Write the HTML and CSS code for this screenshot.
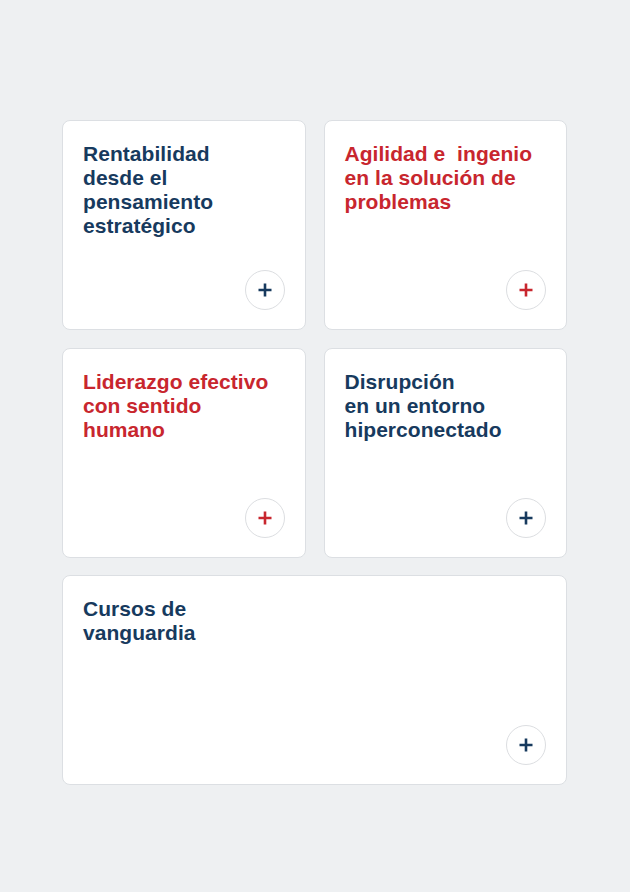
FILE: index.html
```html
<!DOCTYPE html>
<html lang="es">
<head>
<meta charset="utf-8">
<title>Cursos</title>
<link rel="stylesheet" href="styles.css">
</head>
<body>
<main class="grid">
  <article class="card">
    <h2 class="title navy">Rentabilidad<br>desde el<br>pensamiento<br>estratégico</h2>
    <button class="plus navy" aria-label="Ver más"><svg viewBox="0 0 16 16"><path d="M8 1.5v13M1.5 8h13"/></svg></button>
  </article>
  <article class="card">
    <h2 class="title red">Agilidad e&nbsp; ingenio<br>en la solución de<br>problemas</h2>
    <button class="plus red" aria-label="Ver más"><svg viewBox="0 0 16 16"><path d="M8 1.5v13M1.5 8h13"/></svg></button>
  </article>
  <article class="card">
    <h2 class="title red">Liderazgo efectivo<br>con sentido<br>humano</h2>
    <button class="plus red" aria-label="Ver más"><svg viewBox="0 0 16 16"><path d="M8 1.5v13M1.5 8h13"/></svg></button>
  </article>
  <article class="card">
    <h2 class="title navy">Disrupción<br>en un entorno<br>hiperconectado</h2>
    <button class="plus navy" aria-label="Ver más"><svg viewBox="0 0 16 16"><path d="M8 1.5v13M1.5 8h13"/></svg></button>
  </article>
  <article class="card wide">
    <h2 class="title navy">Cursos de<br>vanguardia</h2>
    <button class="plus navy" aria-label="Ver más"><svg viewBox="0 0 16 16"><path d="M8 1.5v13M1.5 8h13"/></svg></button>
  </article>
</main>
</body>
</html>
```
FILE: styles.css
```css
html, body {
  margin: 0;
  padding: 0;
  background: #eef0f2;
}
body {
  font-family: "Liberation Sans", Arial, sans-serif;
}
.grid {
  width: 505px;
  margin: 120px 0 0 62px;
  display: grid;
  grid-template-columns: 1fr 1fr;
  grid-auto-rows: 210px;
  column-gap: 18px;
  row-gap: 17.5px;
}
.card {
  background: #ffffff;
  border: 1px solid #dcdfe3;
  border-radius: 8px;
  padding: 21px 20px 19px 20px;
  display: flex;
  flex-direction: column;
  justify-content: space-between;
  box-sizing: border-box;
}
.wide {
  grid-column: 1 / span 2;
}
.title {
  margin: 0;
  font-size: 21px;
  line-height: 24px;
  font-weight: 700;
  letter-spacing: 0.05px;
}
.navy { color: #173a5e; }
.red { color: #c8262e; }
.plus {
  align-self: flex-end;
  width: 40px;
  height: 40px;
  border-radius: 50%;
  border: 1px solid #dcdee1;
  background: #fff;
  padding: 0;
  display: flex;
  align-items: center;
  justify-content: center;
}
.plus svg {
  width: 16px;
  height: 16px;
  fill: none;
  stroke: currentColor;
  stroke-width: 2.6;
}
```
